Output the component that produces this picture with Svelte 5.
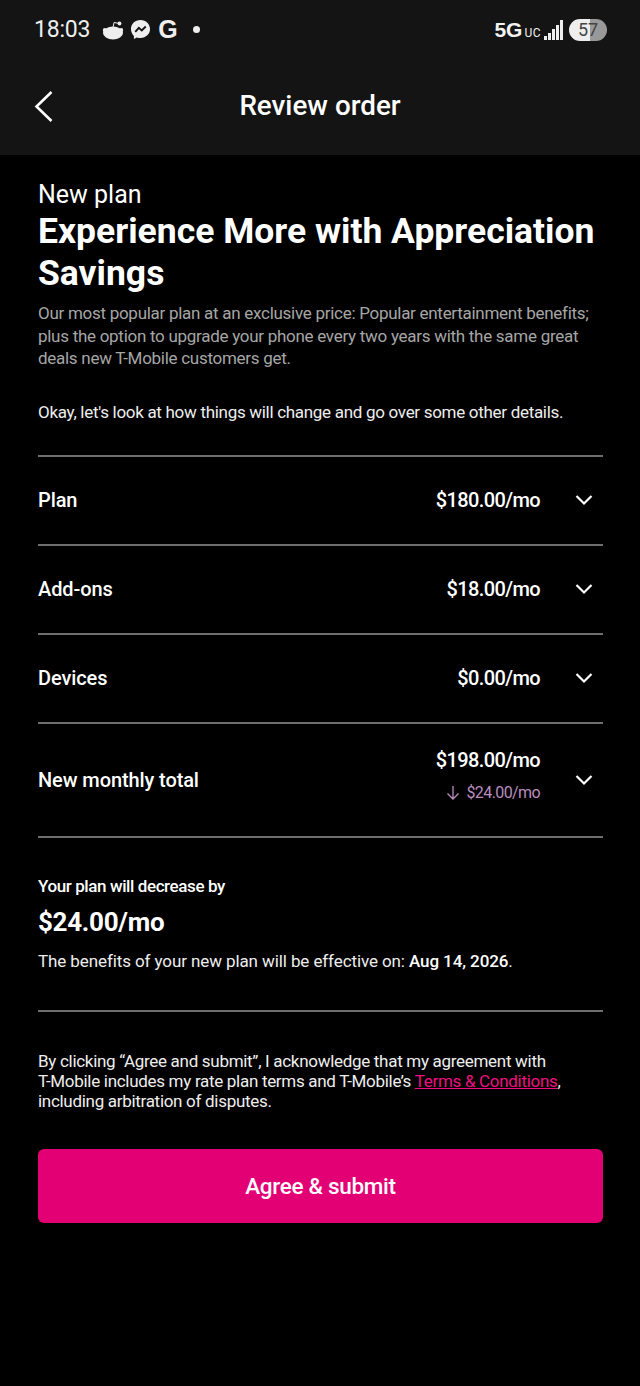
<script>
  const rows = [
    { label: 'Plan', price: '$180.00/mo' },
    { label: 'Add-ons', price: '$18.00/mo' },
    { label: 'Devices', price: '$0.00/mo' },
    { label: 'New monthly total', price: '$198.00/mo', drop: '$24.00/mo' }
  ];
</script>

<div class="page">
  <header class="top">
    <div class="status">
      <div class="status-left">
        <span class="time">18:03</span>
        <svg class="ic-reddit" viewBox="0 0 22 20" width="22" height="20" aria-hidden="true">
          <ellipse cx="11" cy="13" rx="10" ry="6.500" fill="#eee"/>
          <circle cx="2.800" cy="10" r="2" fill="#eee"/>
          <circle cx="19.200" cy="10" r="2" fill="#eee"/>
          <path fill="none" stroke="#eee" stroke-width="1" d="M11 7.500 12 2.500 16.500 3.300"/>
          <circle cx="17.500" cy="3.500" r="1.900" fill="#eee"/>
        </svg>
        <svg class="ic-msg" viewBox="0 0 22 22" width="21" height="21" aria-hidden="true">
          <path fill="#eee" d="M11 1C5.300 1 1 5.100 1 10.600c0 2.900 1.200 5.400 3.100 7.100v3.300l3.100-1.700c1.200.4 2.500.6 3.800.6 5.700 0 10-4.100 10-9.300S16.700 1 11 1z"/>
          <path fill="none" stroke="#141414" stroke-width="2" d="M5.500 13.500 9.300 9.300l3 2.600 4.200-4"/>
        </svg>
        <span class="g">G</span>
        <span class="dot"></span>
      </div>
      <div class="status-right">
        <span class="fiveg">5G</span><span class="uc">UC</span>
        <span class="bars" aria-hidden="true"><i class="b1"></i><i class="b2"></i><i class="b3"></i><i class="b4"></i><i class="b5"></i></span>
        <span class="batt"><span class="batt-num">57</span></span>
      </div>
    </div>
    <div class="nav">
      <svg class="back" viewBox="0 0 20 32" width="20" height="32" aria-hidden="true">
        <path d="M17.500 2 2.500 16.500 17.500 31" fill="none" stroke="#fff" stroke-width="2.600"/>
      </svg>
      <h1 class="nav-title">Review order</h1>
    </div>
  </header>

  <main class="body">
    <div class="eyebrow">New plan</div>
    <h2 class="headline">Experience More with Appreciation Savings</h2>
    <p class="desc">Our most popular plan at an exclusive price: Popular entertainment benefits; plus the option to upgrade your phone every two years with the same great deals new T-Mobile customers get.</p>
    <p class="intro">Okay, let's look at how things will change and go over some other details.</p>

    <div class="rows">
      {#each rows as r}
        <div class="row" class:tall={r.drop}>
          <span class="label">{r.label}</span>
          <div class="amounts">
            <span class="price">{r.price}</span>
            {#if r.drop}
              <span class="drop">
                <svg viewBox="0 0 14 16" width="14" height="16" aria-hidden="true">
                  <path d="M7 1v13M1.500 8.500 7 14l5.500-5.500" fill="none" stroke="#bb8dbf" stroke-width="1.300"/>
                </svg>
                {r.drop}
              </span>
            {/if}
          </div>
          <svg class="chev" viewBox="0 0 18 12" width="18" height="12" aria-hidden="true">
            <path d="M1.500 2 9 9.500 16.500 2" fill="none" stroke="#fff" stroke-width="2.200"/>
          </svg>
        </div>
      {/each}
    </div>

    <section class="summary">
      <div class="sum-label">Your plan will decrease by</div>
      <div class="sum-value">$24.00/mo</div>
      <div class="sum-note">The benefits of your new plan will be effective on: <b>Aug 14, 2026</b>.</div>
    </section>

    <p class="legal">By clicking “Agree and submit”, I acknowledge that my agreement with<br />T-Mobile includes my rate plan terms and T-Mobile’s <a href="#terms">Terms &amp; Conditions</a>,<br />including arbitration of disputes.</p>

    <button class="cta">Agree &amp; submit</button>
  </main>
</div>

<style>
  :global(body) { margin: 0; background: #000; }
  .page {
    width: 640px; height: 1386px; background: #000; color: #fff; overflow: hidden;
    font-family: Roboto, "Noto Sans", sans-serif;
  }
  .top { background: #141414; height: 155px; padding: 0 33px 0 35px; box-sizing: border-box; }
  .status { display: flex; justify-content: space-between; align-items: center; height: 59px; }
  .status-left { display: flex; align-items: center; }
  .time { font-size: 23px; color: #eee; font-weight: 400; margin-right: 12px; letter-spacing: -0.2px; margin-left: -1px; }
  .ic-reddit { margin-right: 6px; }
  .ic-msg { margin-right: 7px; }
  .g { font-family: "Liberation Sans", sans-serif; font-size: 25px; font-weight: 700; color: #eee; line-height: 1; margin-right: 15px; }
  .dot { width: 7px; height: 7px; border-radius: 50%; background: #eee; }
  .status-right { display: flex; align-items: center; }
  .fiveg { font-family: "Liberation Sans", sans-serif; font-size: 21px; font-weight: 700; color: #f2f2f2; }
  .uc { font-size: 12px; color: #eee; margin: 6px 3px 0 2px; letter-spacing: 0.5px; }
  .bars { display: flex; align-items: flex-end; gap: 1px; height: 20px; margin-right: 6px; }
  .bars i { width: 3px; background: #eee; display: block; }
  .b1 { height: 4px; } .b2 { height: 7px; } .b3 { height: 11px; } .b4 { height: 15px; } .b5 { height: 20px; }
  .batt {
    width: 38px; height: 22px; border-radius: 11px; display: flex; align-items: center; justify-content: center;
    background: linear-gradient(90deg, #eee 55%, #999 55%);
  }
  .batt-num { font-size: 18px; color: #444; }
  .nav { position: relative; height: 64px; display: flex; align-items: center; justify-content: center; margin: 15px 2px 0 0; }
  .back { position: absolute; left: -1px; top: 16px; }
  .nav-title { margin: 0; font-size: 27.800px; font-weight: 500; line-height: 1; }

  .body { padding: 25px 37px 0 38px; }
  .eyebrow { font-size: 25px; line-height: 29px; }
  .headline { margin: 0; font-size: 35.500px; line-height: 42px; font-weight: 700; padding-top: 1px; }
  .desc { margin: 8px 0 0; font-size: 17px; line-height: 22.500px; color: #a6a6a6; letter-spacing: -0.28px; }
  .intro { margin: 31px 0 0; font-size: 17px; line-height: 23px; color: #eee; letter-spacing: -0.3px; }
  .rows { margin-top: 31px; border-top: 2px solid #6e6e6e; }
  .row {
    display: flex; align-items: center; height: 87px; border-bottom: 2px solid #6e6e6e;
  }
  .row.tall { height: 112px; }
  .label { flex: 1; font-size: 20px; font-weight: 500; letter-spacing: -0.1px; }
  .amounts { display: flex; flex-direction: column; align-items: flex-end; }
  .row.tall .amounts { padding-bottom: 11px; }
  .price { font-size: 20px; font-weight: 500; line-height: 28px; letter-spacing: -0.6px; }
  .drop { display: flex; align-items: center; gap: 6px; font-size: 16px; color: #bb8dbf; line-height: 20px; margin-top: 9px; letter-spacing: -0.6px; }
  .chev { margin: 0 10px 0 35px; }
  .summary { border-bottom: 2px solid #6e6e6e; height: 174px; box-sizing: border-box; padding-top: 37px; }
  .sum-label { font-size: 17px; font-weight: 500; line-height: 22px; letter-spacing: -0.4px; }
  .sum-value { font-size: 26px; font-weight: 700; line-height: 32px; margin-top: 9px; letter-spacing: -0.3px; }
  .sum-note { font-size: 17px; line-height: 22px; margin-top: 12px; color: #eee; letter-spacing: -0.1px; }
  .sum-note b { font-weight: 500; color: #fff; }
  .legal { margin: 39px 0 0; font-size: 17px; line-height: 20px; color: #eee; letter-spacing: -0.3px; }
  .legal a { color: #ee1080; text-decoration: underline; }
  .cta {
    display: block; width: 100%; height: 74px; margin-top: 38px; border: 0; border-radius: 6px;
    background: #e20074; color: #fff; font: 500 22.500px Roboto, sans-serif; letter-spacing: -0.3px;
  }
</style>
